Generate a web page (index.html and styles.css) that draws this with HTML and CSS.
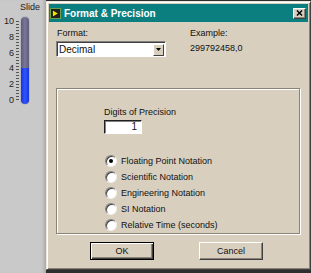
FILE: index.html
```html
<!DOCTYPE html>
<html lang="en">
<head>
    <meta charset="UTF-8">
    <title>Format &amp; Precision</title>
    <link rel="stylesheet" href="styles.css">
</head>
<body>
    <div class="screen">
        <div class="strip">
            <div class="slide-label">Slide</div>
            <div class="slider">
                <div class="scale">
                    <span>10</span>
                    <span>8</span>
                    <span>6</span>
                    <span>4</span>
                    <span>2</span>
                    <span>0</span>
                </div>
                <div class="ticks"></div>
                <div class="track"><div class="fill"></div></div>
            </div>
        </div>

        <div class="dialog">
            <div class="titlebar">
                <svg class="app-icon" viewBox="0 0 11 11">
                    <rect x="0.5" y="0.5" width="10" height="10" fill="#202020" stroke="#6aa04a" />
                    <polygon points="2.5,2 8.5,5.5 2.5,9" fill="#f2e600" stroke="#000" stroke-width="0.6" />
                </svg>
                <span class="title">Format &amp; Precision</span>
                <span class="close">
                    <svg viewBox="0 0 8 7" class="close-x">
                        <path d="M1 0.5 L7 6.5 M7 0.5 L1 6.5" stroke="#000" stroke-width="1.6" />
                    </svg>
                </span>
            </div>

            <div class="body">
                <div class="top-row">
                    <div class="field">
                        <div class="label">Format:</div>
                        <div class="combo">
                            <span class="combo-text">Decimal</span>
                            <span class="combo-btn">
                                <svg viewBox="0 0 5 3" class="arrow"><polygon points="0,0 5,0 2.5,3" fill="#000" /></svg>
                            </span>
                        </div>
                    </div>
                    <div class="example">
                        <div class="label">Example:</div>
                        <div class="value">299792458,0</div>
                    </div>
                </div>

                <div class="group">
                    <div class="digits">
                        <div class="label">Digits of Precision</div>
                        <div class="num">1</div>
                    </div>
                    <ul class="radios">
                        <li><span class="radio checked"></span>Floating Point Notation</li>
                        <li><span class="radio"></span>Scientific Notation</li>
                        <li><span class="radio"></span>Engineering Notation</li>
                        <li><span class="radio"></span>SI Notation</li>
                        <li><span class="radio"></span>Relative Time (seconds)</li>
                    </ul>
                </div>

                <div class="buttons">
                    <button class="btn default">OK</button>
                    <button class="btn">Cancel</button>
                </div>
            </div>
        </div>
    </div>
</body>
</html>
```

FILE: styles.css
```css
body {
    margin: 0;
    font-family: "Liberation Sans", Arial, sans-serif;
    font-size: 9px;
    color: #111;
}

.screen {
    display: flex;
    width: 311px;
    height: 273px;
    background-color: #2e2e2e;
    overflow: hidden;
}

/* left panel with the slide control */
.strip {
    width: 46px;
    flex-shrink: 0;
    background-color: #c9c9c9;
    box-shadow: inset -4px 0 3px -2px #a8a8a8;
    display: flex;
    flex-direction: column;
}

.slide-label {
    margin: 2px 0 0 20px;
    line-height: 11px;
    color: #222;
}

.slider {
    display: flex;
    margin-top: 3px;
    height: 90px;
}

.scale {
    width: 14px;
    display: flex;
    flex-direction: column;
    justify-content: space-between;
    align-items: flex-end;
    line-height: 11px;
    color: #222;
}

.ticks {
    width: 3px;
    margin: 5px 0 5px 2px;
    background: repeating-linear-gradient(to bottom, #555 0, #555 1px, transparent 1px, transparent 3px);
}

.track {
    width: 8px;
    margin: 1px 0 0 2px;
    height: 87px;
    border-radius: 4px;
    background: linear-gradient(to right, #5d5b7a, #7a7896 50%, #5d5b7a);
    box-shadow: 0 0 0 1px #b8b8c4;
    display: flex;
    flex-direction: column;
    justify-content: flex-end;
    overflow: hidden;
}

.fill {
    height: 41%;
    background: linear-gradient(to right, #1634d8, #2f55ff 50%, #1634d8);
    border-radius: 0 0 4px 4px;
}

/* dialog window */
.dialog {
    flex: 1;
    box-sizing: border-box;
    height: 269px;
    margin-top: 1px;
    padding: 2px;
    background-color: #d8cfbf;
    border: 1px solid;
    border-color: #ebe5da #404040 #404040 #ebe5da;
    box-shadow: inset 1px 1px #fff, inset -1px -1px #8a8476;
}

.titlebar {
    height: 18px;
    background-color: #0b7f7f;
    display: flex;
    align-items: center;
    padding: 0 2px 0 1px;
}

.app-icon {
    width: 11px;
    height: 11px;
}

.title {
    margin-left: 3px;
    flex: 1;
    color: #fff;
    font-weight: bold;
    font-size: 10px;
}

.close {
    width: 13px;
    height: 11px;
    box-sizing: border-box;
    background-color: #d8cfbf;
    border: 1px solid;
    border-color: #fff #404040 #404040 #fff;
    box-shadow: inset -1px -1px #8a8476;
    display: flex;
    align-items: center;
    justify-content: center;
}

.close-x {
    width: 7px;
    height: 6px;
}

.body {
    padding: 5px 0 0 7px;
}

.label {
    line-height: 13px;
}

.top-row {
    display: flex;
    gap: 24px;
}

.field .label {
    margin-left: 1px;
}

.combo {
    margin-top: 1px;
    width: 110px;
    height: 16px;
    box-sizing: border-box;
    background-color: #fff;
    border: 1px solid;
    border-color: #808080 #fff #fff #808080;
    box-shadow: inset 1px 1px #404040;
    display: flex;
    align-items: center;
    padding: 1px 1px 0 2px;
}

.combo-text {
    flex: 1;
    font-size: 10px;
}

.combo-btn {
    width: 11px;
    height: 12px;
    box-sizing: border-box;
    background-color: #d8cfbf;
    border: 1px solid;
    border-color: #fff #404040 #404040 #fff;
    display: flex;
    align-items: center;
    justify-content: center;
}

.arrow {
    width: 5px;
    height: 3px;
}

.example .value {
    line-height: 13px;
    margin-top: 2px;
}

.group {
    margin-top: 31px;
    width: 244px;
    height: 146px;
    box-sizing: border-box;
    border: 1px solid #8a8476;
    box-shadow: inset 1px 1px #fff, 1px 1px #fff;
    padding: 17px 0 0 48px;
}

.digits {
    margin-left: -1px;
}

.num {
    margin-top: 1px;
    width: 38px;
    height: 14px;
    box-sizing: border-box;
    background-color: #fff;
    border: 1px solid;
    border-color: #202020 #fff #fff #202020;
    box-shadow: inset 1px 1px #808080;
    text-align: right;
    padding-right: 4px;
    font-size: 10px;
    line-height: 12px;
}

.radios {
    list-style: none;
    margin: 19px 0 0;
    padding: 0;
}

.radios li {
    height: 16px;
    display: flex;
    align-items: center;
    gap: 4px;
}

.radio {
    width: 12px;
    height: 12px;
    box-sizing: border-box;
    border-radius: 50%;
    background-color: #fff;
    border: 1px solid;
    border-color: #808080 #f4f0ea #f4f0ea #808080;
    box-shadow: inset 1px 1px #404040;
    display: flex;
    align-items: center;
    justify-content: center;
}

.radio.checked::after {
    content: "";
    width: 4px;
    height: 4px;
    border-radius: 50%;
    background-color: #000;
}

.buttons {
    display: flex;
    gap: 45px;
    margin: 8px 0 0 34px;
}

.btn {
    width: 64px;
    height: 18px;
    box-sizing: border-box;
    background-color: #d8cfbf;
    border: 1px solid;
    border-color: #fff #404040 #404040 #fff;
    box-shadow: inset -1px -1px #8a8476;
    font-family: inherit;
    font-size: 9px;
    color: #111;
    padding: 0;
}

.btn.default {
    border-color: #000;
    box-shadow: inset 1px 1px #fff, inset -1px -1px #404040, inset -2px -2px #8a8476;
}
```
